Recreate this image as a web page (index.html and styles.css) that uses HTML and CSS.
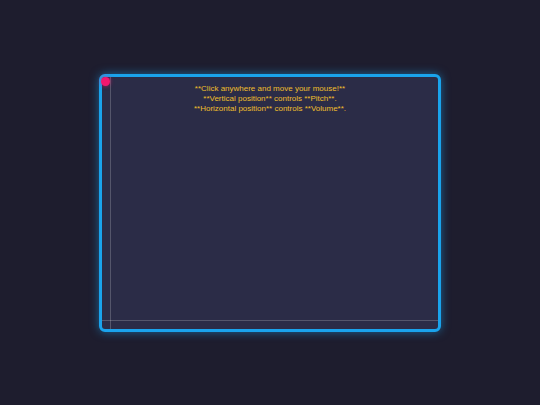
FILE: index.html
```html
<!DOCTYPE html>
<html>
<head>
<meta charset="utf-8">
<link rel="stylesheet" href="styles.css">
</head>
<body>
<div class="stage">
  <div class="pad">
    <div class="hint">
      <div>**Click anywhere and move your mouse!**</div>
      <div>**Vertical position** controls **Pitch**.</div>
      <div>**Horizontal position** controls **Volume**.</div>
    </div>
    <div class="axis-y"></div>
    <div class="axis-x"></div>
    <div class="dot"></div>
  </div>
</div>
</body>
</html>
```
FILE: styles.css
```css
html, body {
  margin: 0;
  padding: 0;
  background: #1e1d2e;
  font-family: "Liberation Sans", Arial, sans-serif;
}
.stage {
  width: 540px;
  height: 405px;
  display: flex;
  align-items: center;
  justify-content: center;
}
.pad {
  position: relative;
  box-sizing: border-box;
  width: 342px;
  height: 258px;
  border: 3px solid #1aa3ec;
  border-radius: 6px;
  background: #2b2c47;
  box-shadow: 0 0 10px rgba(26, 163, 236, 0.55);
  padding-top: 7px;
}
.hint {
  text-align: center;
  color: #f0bf2c;
  font-size: 8px;
  line-height: 10px;
}
.axis-y {
  position: absolute;
  left: 8px;
  top: 0;
  bottom: 0;
  width: 1px;
  background: rgba(255, 255, 255, 0.2);
}
.axis-x {
  position: absolute;
  left: 0;
  right: 0;
  bottom: 8px;
  height: 1px;
  background: rgba(255, 255, 255, 0.2);
}
.dot {
  position: absolute;
  left: -1px;
  top: 0px;
  width: 9px;
  height: 9px;
  border-radius: 50%;
  background: #f2176f;
  box-shadow: 0 0 4px rgba(242, 23, 111, 0.7);
}
```
